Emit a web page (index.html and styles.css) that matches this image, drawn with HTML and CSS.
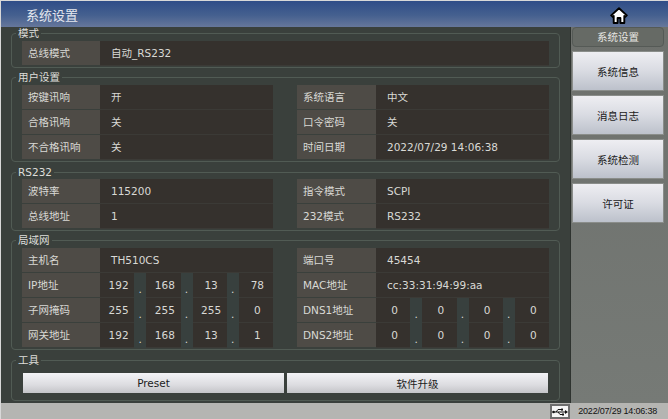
FILE: index.html
```html
<!DOCTYPE html>
<html lang="zh">
<head>
<meta charset="utf-8">
<title>系统设置</title>
<link rel="stylesheet" href="styles.css">
</head>
<body>
<div class="screen">
  <header class="titlebar">
    <span class="title">系统设置</span>
    <svg class="home" width="18" height="17" viewBox="0 0 18 17"><path d="M9 1.2 1.2 8.4l1.5 1.5 1-.9V16h3.9v-5h2.8v5h3.9V9l1 .9 1.5-1.5z" fill="#fff" stroke="#000" stroke-width="1.9" stroke-linejoin="round"/></svg>
  </header>
  <div class="body">
    <main class="content">
      <section class="group g-mode">
        <span class="legend">模式</span>
        <div class="row"><div class="cell"><span class="lab">总线模式</span><span class="val wide">自动_RS232</span></div></div>
      </section>
      <section class="group g-user">
        <span class="legend">用户设置</span>
        <div class="row"><div class="cell"><span class="lab">按键讯响</span><span class="val">开</span></div><div class="cell"><span class="lab">系统语言</span><span class="val">中文</span></div></div>
        <div class="row"><div class="cell"><span class="lab">合格讯响</span><span class="val">关</span></div><div class="cell"><span class="lab">口令密码</span><span class="val">关</span></div></div>
        <div class="row"><div class="cell"><span class="lab">不合格讯响</span><span class="val">关</span></div><div class="cell"><span class="lab">时间日期</span><span class="val">2022/07/29 14:06:38</span></div></div>
      </section>
      <section class="group g-rs">
        <span class="legend">RS232</span>
        <div class="row"><div class="cell"><span class="lab">波特率</span><span class="val">115200</span></div><div class="cell"><span class="lab">指令模式</span><span class="val">SCPI</span></div></div>
        <div class="row"><div class="cell"><span class="lab">总线地址</span><span class="val">1</span></div><div class="cell"><span class="lab">232模式</span><span class="val">RS232</span></div></div>
      </section>
      <section class="group g-lan">
        <span class="legend">局域网</span>
        <div class="row"><div class="cell"><span class="lab">主机名</span><span class="val">TH510CS</span></div><div class="cell"><span class="lab">端口号</span><span class="val">45454</span></div></div>
        <div class="row"><div class="cell"><span class="lab">IP地址</span><span class="ip"><b>192</b><i>.</i><b>168</b><i>.</i><b>13</b><i>.</i><b>78</b></span></div><div class="cell"><span class="lab">MAC地址</span><span class="val">cc:33:31:94:99:aa</span></div></div>
        <div class="row"><div class="cell"><span class="lab">子网掩码</span><span class="ip"><b>255</b><i>.</i><b>255</b><i>.</i><b>255</b><i>.</i><b>0</b></span></div><div class="cell"><span class="lab">DNS1地址</span><span class="ip"><b>0</b><i>.</i><b>0</b><i>.</i><b>0</b><i>.</i><b>0</b></span></div></div>
        <div class="row"><div class="cell"><span class="lab">网关地址</span><span class="ip"><b>192</b><i>.</i><b>168</b><i>.</i><b>13</b><i>.</i><b>1</b></span></div><div class="cell"><span class="lab">DNS2地址</span><span class="ip"><b>0</b><i>.</i><b>0</b><i>.</i><b>0</b><i>.</i><b>0</b></span></div></div>
      </section>
      <section class="group g-tool">
        <span class="legend">工具</span>
        <div class="tools"><button class="tool">Preset</button><button class="tool">软件升级</button></div>
      </section>
    </main>
    <aside class="side">
      <div class="side-head">系统设置</div>
      <button class="side-btn">系统信息</button>
      <button class="side-btn">消息日志</button>
      <button class="side-btn">系统检测</button>
      <button class="side-btn">许可证</button>
    </aside>
  </div>
  <footer class="status">
    <span class="usb"><svg width="16" height="8" viewBox="0 0 16 8"><path d="M1 4h13M4 4l2-2.5h3M6 4l2 2.5h2" fill="none" stroke="#111" stroke-width="1"/><path d="M16 4l-3-2v4z" fill="#111"/><circle cx="1.5" cy="4" r="1.3" fill="#111"/><rect x="9" y="0.6" width="2" height="2" fill="#111"/><rect x="10" y="5.5" width="2" height="2" fill="#111"/></svg></span>
    <span class="clock">2022/07/29 14:06:38</span>
  </footer>
</div>
</body>
</html>
```
FILE: styles.css
```css
* { box-sizing: border-box; }
html, body { margin: 0; padding: 0; }
body { width: 668px; height: 419px; overflow: hidden; background: #d8d8d8; }
.screen {
  width: 667px; height: 418px; margin: 1px 0 0 1px;
  display: flex; flex-direction: column;
  font-family: "DejaVu Sans", "Noto Sans CJK SC", sans-serif;
  font-size: 10.5px; color: #d9d9d5;
}
.titlebar {
  height: 26px; flex: none; display: flex; align-items: center; justify-content: space-between;
  padding: 0 40px 0 25px;
  background: linear-gradient(180deg, #2f4d88 0%, #45608f 55%, #66779b 100%);
}
.title { font-size: 13px; color: #e4e7ee; }
.home { display: block; margin-top: 2px; }
.body { flex: 1; display: flex; min-height: 0; }
.content { width: 569px; flex: none; background: #3a403c; padding: 6px 10px 0 10px; }
.group {
  position: relative; border: 1px solid #515b54; border-radius: 4px; padding: 0 10px 0 10px;
}
.legend {
  position: absolute; left: 4px; top: -7px; padding: 0 2px; line-height: 12px;
  background: #3a403c; color: #dededa;
}
.g-mode { height: 35px; padding-top: 7px; margin-bottom: 9px; }
.g-user { height: 85px; padding-top: 7px; margin-bottom: 10px; }
.g-rs { height: 59px; padding-top: 6px; margin-bottom: 9px; }
.g-lan { height: 110px; padding-top: 7px; margin-bottom: 10px; }
.g-tool { height: 41px; padding-top: 12px; }
.row { display: flex; height: 25px; gap: 24px; }
.cell { width: 251px; height: 25px; display: flex; flex: none; }
.cell + .cell { width: 252px; }
.g-mode .cell { width: 527px; }
.lab {
  width: 78px; flex: none; height: 24px; background: #4e4b46; padding-left: 6px; line-height: 24px; white-space: nowrap;
}
.cell + .cell .lab { width: 79px; }
.val {
  flex: 1; height: 25px; background: #35312d; border-bottom: 1px solid #3b3a36; padding-left: 11px; line-height: 24px; white-space: nowrap;
}
.ip { flex: 1; display: flex; }
.ip b {
  flex: 1; height: 25px; background: #35312d; border-bottom: 1px solid #3b3a36; padding-left: 3px; font-weight: normal; text-align: center; line-height: 24px;
}
.ip i { width: 12px; flex: none; font-style: normal; text-align: center; line-height: 32px; background: #38403e; }
.tools { display: flex; gap: 3px; padding-left: 1px; }
.tool {
  width: 261px; height: 20px; padding: 0; border: 0; border-radius: 0;
  background: linear-gradient(180deg, #f3f3f6 0%, #dcdce0 60%, #c4c4c8 100%);
  color: #1b1b1b; font: 10.5px "DejaVu Sans", "Noto Sans CJK SC", sans-serif;
}
.side {
  flex: 1; background: linear-gradient(180deg, #6d706c, #767a76);
  padding: 0 4px 0 1px; display: flex; flex-direction: column; border-left: 1px solid #2e332f;
}
.side-head {
  height: 20px; margin-bottom: 4px; border: 1px solid #555a56; border-radius: 4px;
  background: #666a65; color: #e6e6e2; text-align: center; line-height: 18px; font-size: 10.5px; flex: none;
}
.side-btn {
  height: 40px; flex: none; margin-bottom: 4px; padding: 0; border: 1px solid #8a8d8a;
  background: linear-gradient(180deg, #eeeef2 0%, #d9dbe2 50%, #bcc1cb 100%);
  color: #1a1a1a; font: 10.5px "DejaVu Sans", "Noto Sans CJK SC", sans-serif;
}
.status {
  height: 16px; flex: none; background: #b5b5b2; display: flex; justify-content: flex-end; align-items: flex-end;
  padding-right: 11px; gap: 8px;
}
.usb {
  width: 20px; height: 15px; background: #f5f5f5; border: 2px solid #6d6d6d; display: flex; align-items: center; justify-content: center;
}
.clock { font: 9px/15px "Liberation Sans", sans-serif; color: #111; letter-spacing: -0.2px; }
```
